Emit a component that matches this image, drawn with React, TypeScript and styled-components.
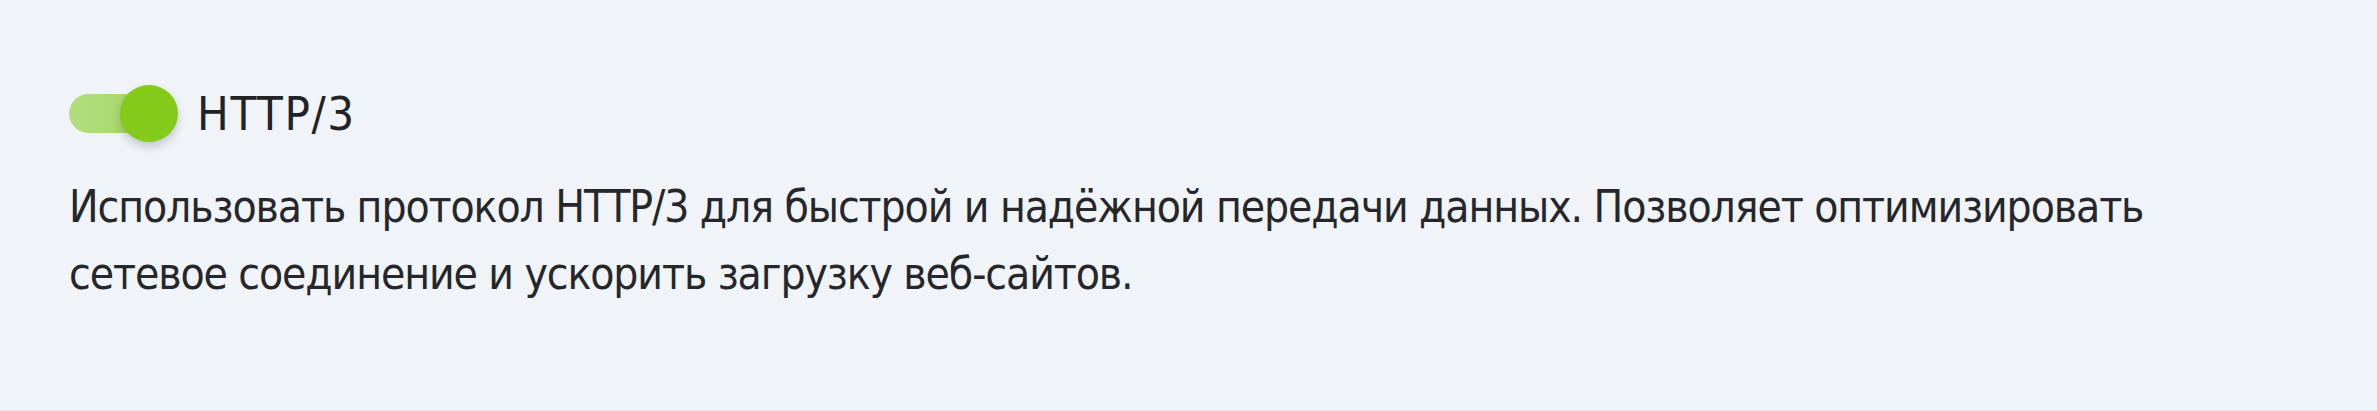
import React, { useState } from "react";
import styled, { createGlobalStyle } from "styled-components";

const GlobalStyle = createGlobalStyle`
    html, body {
        margin: 0;
        padding: 0;
        background: #f0f3f8;
    }
`;

const Panel = styled.section`
    box-sizing: border-box;
    height: 411px;
    padding: 85px 0 0 69px;
    background: #f0f3f8;
    border-bottom: 1px solid #dde7ef;
    font-family: "DejaVu Sans Condensed", "DejaVu Sans", sans-serif;
    color: #25272b;
`;

const Header = styled.div`
    display: flex;
    align-items: center;
    gap: 19px;
    height: 57px;
`;

const Track = styled.button<{ $on: boolean }>`
    position: relative;
    width: 109px;
    height: 57px;
    padding: 0;
    border: 0;
    background: transparent;
    cursor: pointer;

    &::before {
        content: "";
        position: absolute;
        left: 0;
        top: 9px;
        width: 100px;
        height: 39px;
        border-radius: 20px;
        background: ${(p) =>
            p.$on
                ? "linear-gradient(90deg, #b3de80 0%, #9fd45c 100%)"
                : "#c9d0d8"};
    }
`;

const Knob = styled.span<{ $on: boolean }>`
    position: absolute;
    top: 0;
    left: ${(p) => (p.$on ? "51px" : "0")};
    width: 58px;
    height: 57px;
    border-radius: 50%;
    background: ${(p) => (p.$on ? "#83cb18" : "#ffffff")};
    box-shadow: 0 5px 9px rgba(40, 50, 60, 0.22);
`;

const Title = styled.h2`
    margin: 0;
    font-size: 47px;
    font-weight: 400;
    letter-spacing: 1.6px;
    line-height: 57px;
    color: #222326;
`;

const Description = styled.p`
    margin: 31px 0 0;
    max-width: 2120px;
    font-size: 44px;
    letter-spacing: -1.1px;
    line-height: 67px;
    color: #25272b;
`;

export default function App() {
    const [enabled, setEnabled] = useState(true);

    return (
        <>
            <GlobalStyle />
            <Panel>
                <Header>
                    <Track
                        $on={enabled}
                        aria-pressed={enabled}
                        onClick={() => setEnabled(!enabled)}
                    >
                        <Knob $on={enabled} />
                    </Track>
                    <Title>HTTP/3</Title>
                </Header>
                <Description>
                    Использовать протокол HTTP/3 для быстрой и надёжной передачи данных. Позволяет оптимизировать
                    сетевое соединение и ускорить загрузку веб-сайтов.
                </Description>
            </Panel>
        </>
    );
}
